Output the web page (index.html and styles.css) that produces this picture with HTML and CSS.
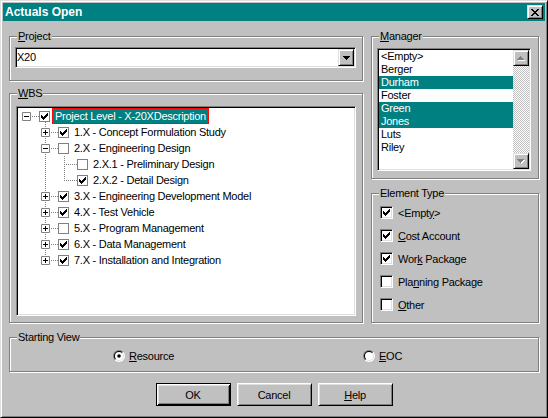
FILE: index.html
```html
<!DOCTYPE html>
<html>
<head>
<meta charset="utf-8">
<title>Actuals Open</title>
<link rel="stylesheet" href="styles.css">
</head>
<body>
<div class="window">
  <div class="titlebar">
    <span class="title">Actuals Open</span>
    <span class="close"><svg class="ico" width="8" height="7" viewBox="0 0 8 7"><path d="M0 0h2v1h-2zM6 0h2v1h-2zM1 1h2v1h-2zM5 1h2v1h-2zM2 2h4v1h-4zM3 3h2v1h-2zM2 4h4v1h-4zM1 5h2v1h-2zM5 5h2v1h-2zM0 6h2v1h-2zM6 6h2v1h-2z"/></svg></span>
  </div>
  <div class="client">
    <div class="top">
      <div class="leftcol">
        <div class="group project">
          <span class="legend"><u>P</u>roject</span>
          <div class="combo">
            <span class="combo-text">X20</span>
            <span class="dropbtn raised"><svg class="ico" width="7" height="4" viewBox="0 0 7 4"><path d="M0 0h7v1h-7zM1 1h5v1h-5zM2 2h3v1h-3zM3 3h1v1h-1z"/></svg></span>
          </div>
        </div>
        <div class="group wbs">
          <span class="legend"><u>W</u>BS</span>
          <div class="tree">
            <div class="row">
              <span class="col h"><svg class="exp" width="9" height="9" viewBox="0 0 9 9"><path d="M0.5 0.5h8v8h-8z" fill="#fff" stroke="#808080"/><path d="M2 4h5v1h-5z"/></svg></span>
              <span class="tcheck"><span class="tbox"><svg class="ico" width="7" height="7" viewBox="0 0 7 7"><path d="M6 0h1v1h-1zM5 1h2v1h-2zM0 2h1v1h-1zM4 2h3v1h-3zM0 3h2v1h-2zM3 3h3v1h-3zM0 4h5v1h-5zM1 5h3v1h-3zM2 6h1v1h-1z"/></svg></span></span>
              <span class="tlabel sel">Project Level - X-20XDescription</span>
            </div>
            <div class="row">
              <span class="col"></span>
              <span class="col v first h"><svg class="exp" width="9" height="9" viewBox="0 0 9 9"><path d="M0.5 0.5h8v8h-8z" fill="#fff" stroke="#808080"/><path d="M2 4h5v1h-5zM4 2h1v5h-1z"/></svg></span>
              <span class="tcheck"><span class="tbox"><svg class="ico" width="7" height="7" viewBox="0 0 7 7"><path d="M6 0h1v1h-1zM5 1h2v1h-2zM0 2h1v1h-1zM4 2h3v1h-3zM0 3h2v1h-2zM3 3h3v1h-3zM0 4h5v1h-5zM1 5h3v1h-3zM2 6h1v1h-1z"/></svg></span></span>
              <span class="tlabel">1.X - Concept Formulation Study</span>
            </div>
            <div class="row">
              <span class="col"></span>
              <span class="col v h"><svg class="exp" width="9" height="9" viewBox="0 0 9 9"><path d="M0.5 0.5h8v8h-8z" fill="#fff" stroke="#808080"/><path d="M2 4h5v1h-5z"/></svg></span>
              <span class="tcheck"><span class="tbox"></span></span>
              <span class="tlabel">2.X - Engineering Design</span>
            </div>
            <div class="row">
              <span class="col"></span>
              <span class="col v"></span>
              <span class="col v h"></span>
              <span class="tcheck"><span class="tbox"></span></span>
              <span class="tlabel">2.X.1 - Preliminary Design</span>
            </div>
            <div class="row">
              <span class="col"></span>
              <span class="col v"></span>
              <span class="col v last h"></span>
              <span class="tcheck"><span class="tbox"><svg class="ico" width="7" height="7" viewBox="0 0 7 7"><path d="M6 0h1v1h-1zM5 1h2v1h-2zM0 2h1v1h-1zM4 2h3v1h-3zM0 3h2v1h-2zM3 3h3v1h-3zM0 4h5v1h-5zM1 5h3v1h-3zM2 6h1v1h-1z"/></svg></span></span>
              <span class="tlabel">2.X.2 - Detail Design</span>
            </div>
            <div class="row">
              <span class="col"></span>
              <span class="col v h"><svg class="exp" width="9" height="9" viewBox="0 0 9 9"><path d="M0.5 0.5h8v8h-8z" fill="#fff" stroke="#808080"/><path d="M2 4h5v1h-5zM4 2h1v5h-1z"/></svg></span>
              <span class="tcheck"><span class="tbox"><svg class="ico" width="7" height="7" viewBox="0 0 7 7"><path d="M6 0h1v1h-1zM5 1h2v1h-2zM0 2h1v1h-1zM4 2h3v1h-3zM0 3h2v1h-2zM3 3h3v1h-3zM0 4h5v1h-5zM1 5h3v1h-3zM2 6h1v1h-1z"/></svg></span></span>
              <span class="tlabel">3.X - Engineering Development Model</span>
            </div>
            <div class="row">
              <span class="col"></span>
              <span class="col v h"><svg class="exp" width="9" height="9" viewBox="0 0 9 9"><path d="M0.5 0.5h8v8h-8z" fill="#fff" stroke="#808080"/><path d="M2 4h5v1h-5zM4 2h1v5h-1z"/></svg></span>
              <span class="tcheck"><span class="tbox"><svg class="ico" width="7" height="7" viewBox="0 0 7 7"><path d="M6 0h1v1h-1zM5 1h2v1h-2zM0 2h1v1h-1zM4 2h3v1h-3zM0 3h2v1h-2zM3 3h3v1h-3zM0 4h5v1h-5zM1 5h3v1h-3zM2 6h1v1h-1z"/></svg></span></span>
              <span class="tlabel">4.X - Test Vehicle</span>
            </div>
            <div class="row">
              <span class="col"></span>
              <span class="col v h"><svg class="exp" width="9" height="9" viewBox="0 0 9 9"><path d="M0.5 0.5h8v8h-8z" fill="#fff" stroke="#808080"/><path d="M2 4h5v1h-5zM4 2h1v5h-1z"/></svg></span>
              <span class="tcheck"><span class="tbox"></span></span>
              <span class="tlabel">5.X - Program Management</span>
            </div>
            <div class="row">
              <span class="col"></span>
              <span class="col v h"><svg class="exp" width="9" height="9" viewBox="0 0 9 9"><path d="M0.5 0.5h8v8h-8z" fill="#fff" stroke="#808080"/><path d="M2 4h5v1h-5zM4 2h1v5h-1z"/></svg></span>
              <span class="tcheck"><span class="tbox"><svg class="ico" width="7" height="7" viewBox="0 0 7 7"><path d="M6 0h1v1h-1zM5 1h2v1h-2zM0 2h1v1h-1zM4 2h3v1h-3zM0 3h2v1h-2zM3 3h3v1h-3zM0 4h5v1h-5zM1 5h3v1h-3zM2 6h1v1h-1z"/></svg></span></span>
              <span class="tlabel">6.X - Data Management</span>
            </div>
            <div class="row">
              <span class="col"></span>
              <span class="col v last h"><svg class="exp" width="9" height="9" viewBox="0 0 9 9"><path d="M0.5 0.5h8v8h-8z" fill="#fff" stroke="#808080"/><path d="M2 4h5v1h-5zM4 2h1v5h-1z"/></svg></span>
              <span class="tcheck"><span class="tbox"><svg class="ico" width="7" height="7" viewBox="0 0 7 7"><path d="M6 0h1v1h-1zM5 1h2v1h-2zM0 2h1v1h-1zM4 2h3v1h-3zM0 3h2v1h-2zM3 3h3v1h-3zM0 4h5v1h-5zM1 5h3v1h-3zM2 6h1v1h-1z"/></svg></span></span>
              <span class="tlabel">7.X - Installation and Integration</span>
            </div>
          </div>
        </div>
      </div>
      <div class="rightcol">
        <div class="group manager">
          <span class="legend"><u>M</u>anager</span>
          <div class="listbox">
            <ul class="list">
              <li>&lt;Empty&gt;</li>
              <li>Berger</li>
              <li class="sel">Durham</li>
              <li>Foster</li>
              <li class="sel">Green</li>
              <li class="sel">Jones</li>
              <li>Luts</li>
              <li>Riley</li>
            </ul>
            <div class="vscroll">
              <span class="sbtn raised"><svg class="ico" width="8" height="5" viewBox="0 0 8 5"><path fill="#fff" d="M4 1h1v1h-1zM3 2h3v1h-3zM2 3h5v1h-5zM1 4h7v1h-7z"/><path fill="#808080" d="M3 0h1v1h-1zM2 1h3v1h-3zM1 2h5v1h-5zM0 3h7v1h-7z"/></svg></span>
              <span class="track"></span>
              <span class="sbtn raised"><svg class="ico" width="8" height="5" viewBox="0 0 8 5"><path fill="#fff" d="M1 1h7v1h-7zM2 2h5v1h-5zM3 3h3v1h-3zM4 4h1v1h-1z"/><path fill="#808080" d="M0 0h7v1h-7zM1 1h5v1h-5zM2 2h3v1h-3zM3 3h1v1h-1z"/></svg></span>
            </div>
          </div>
        </div>
        <div class="group etype">
          <span class="legend">Element Type</span>
          <div class="crow"><span class="cbox"><svg class="ico" width="7" height="7" viewBox="0 0 7 7"><path d="M6 0h1v1h-1zM5 1h2v1h-2zM0 2h1v1h-1zM4 2h3v1h-3zM0 3h2v1h-2zM3 3h3v1h-3zM0 4h5v1h-5zM1 5h3v1h-3zM2 6h1v1h-1z"/></svg></span><span>&lt;Empt<u>y</u>&gt;</span></div>
          <div class="crow"><span class="cbox"><svg class="ico" width="7" height="7" viewBox="0 0 7 7"><path d="M6 0h1v1h-1zM5 1h2v1h-2zM0 2h1v1h-1zM4 2h3v1h-3zM0 3h2v1h-2zM3 3h3v1h-3zM0 4h5v1h-5zM1 5h3v1h-3zM2 6h1v1h-1z"/></svg></span><span><u>C</u>ost Account</span></div>
          <div class="crow"><span class="cbox"><svg class="ico" width="7" height="7" viewBox="0 0 7 7"><path d="M6 0h1v1h-1zM5 1h2v1h-2zM0 2h1v1h-1zM4 2h3v1h-3zM0 3h2v1h-2zM3 3h3v1h-3zM0 4h5v1h-5zM1 5h3v1h-3zM2 6h1v1h-1z"/></svg></span><span>Wor<u>k</u> Package</span></div>
          <div class="crow"><span class="cbox"></span><span>Pla<u>n</u>ning Package</span></div>
          <div class="crow"><span class="cbox"></span><span><u>O</u>ther</span></div>
        </div>
      </div>
    </div>
    <div class="group sview">
      <span class="legend">Starting View</span>
      <div class="radios">
        <div class="radio">
          <svg class="ico" width="12" height="12" viewBox="0 0 12 12">
            <defs>
              <linearGradient id="rout" x1="0" y1="0" x2="1" y2="1"><stop offset="0.5" stop-color="#808080"/><stop offset="0.5" stop-color="#fff"/></linearGradient>
              <linearGradient id="rin" x1="0" y1="0" x2="1" y2="1"><stop offset="0.5" stop-color="#000"/><stop offset="0.5" stop-color="#dfdfdf"/></linearGradient>
            </defs>
            <circle cx="6" cy="6" r="6" fill="url(#rout)"/>
            <circle cx="6" cy="6" r="5" fill="url(#rin)"/>
            <circle cx="6" cy="6" r="4" fill="#fff"/>
            <circle cx="6" cy="6" r="1.8" fill="#000"/>
          </svg>
          <span><u>R</u>esource</span>
        </div>
        <div class="radio">
          <svg class="ico" width="12" height="12" viewBox="0 0 12 12">
            <circle cx="6" cy="6" r="6" fill="url(#rout)"/>
            <circle cx="6" cy="6" r="5" fill="url(#rin)"/>
            <circle cx="6" cy="6" r="4" fill="#fff"/>
          </svg>
          <span><u>E</u>OC</span>
        </div>
      </div>
    </div>
    <div class="buttons">
      <button class="btn default">OK</button>
      <button class="btn">Cancel</button>
      <button class="btn"><u>H</u>elp</button>
    </div>
  </div>
</div>
</body>
</html>
```
FILE: styles.css
```css
html, body {
  margin: 0;
  padding: 0;
  background: #c0c0c0;
}
body {
  font-family: "Liberation Sans", Arial, sans-serif;
  font-size: 11px;
  letter-spacing: -0.25px;
  color: #000;
}
.ico { display: block; }

.raised {
  box-sizing: border-box;
  border: 1px solid;
  border-color: #dfdfdf #000 #000 #dfdfdf;
  box-shadow: inset 1px 1px #fff, inset -1px -1px #808080;
  background: #c0c0c0;
}

.window {
  width: 548px;
  height: 418px;
  box-sizing: border-box;
  border: 1px solid;
  border-color: #dfdfdf #000 #000 #dfdfdf;
  box-shadow: inset 1px 1px #fff, inset -1px -1px #808080;
  padding: 2px;
  background: #c0c0c0;
}

.titlebar {
  height: 18px;
  background: #008080;
  display: flex;
  align-items: center;
  justify-content: space-between;
  padding: 0 2px;
}
.title {
  color: #fff;
  font-weight: bold;
  font-size: 12px;
  letter-spacing: 0;
  line-height: 18px;
}
.close {
  width: 16px;
  height: 14px;
  box-sizing: border-box;
  border: 1px solid;
  border-color: #dfdfdf #000 #000 #dfdfdf;
  box-shadow: inset 1px 1px #fff, inset -1px -1px #808080;
  background: #c0c0c0;
  display: flex;
  align-items: center;
  justify-content: center;
}

.client {
  padding: 15px 6px 0;
}
.top {
  display: grid;
  grid-template-columns: 354px 168px;
  column-gap: 8px;
}
.leftcol, .rightcol {
  display: flex;
  flex-direction: column;
}

.group {
  position: relative;
  box-sizing: border-box;
  border: 1px solid #808080;
  box-shadow: inset 1px 1px #fff, 1px 1px #fff;
}
.legend {
  position: absolute;
  top: -7px;
  left: 7px;
  padding: 0 1px;
  line-height: 13px;
  background: #c0c0c0;
  white-space: nowrap;
}

/* Project */
.project {
  height: 45px;
  padding: 10px 6px 0 5px;
}
.combo {
  display: flex;
  height: 21px;
  box-sizing: border-box;
  border: 1px solid;
  border-color: #808080 #fff #fff #808080;
  box-shadow: inset 1px 1px #000, inset -1px -1px #dfdfdf;
  background: #fff;
  padding: 1px;
}
.combo-text {
  flex: 1;
  line-height: 17px;
}
.dropbtn {
  width: 16px;
  height: 17px;
  display: flex;
  align-items: center;
  justify-content: center;
}

/* WBS tree */
.wbs {
  height: 230px;
  margin-top: 12px;
  padding: 12px 6px 0 6px;
}
.tree {
  height: 210px;
  box-sizing: border-box;
  background: #fff;
  border: 1px solid;
  border-color: #808080 #fff #fff #808080;
  box-shadow: inset 1px 1px #000, inset -1px -1px #dfdfdf;
  padding: 1px;
}
.row {
  display: flex;
  align-items: flex-start;
  height: 16px;
}
.col {
  position: relative;
  flex: none;
  width: 19px;
  height: 16px;
}
.col.v::before {
  content: "";
  position: absolute;
  left: 8px;
  top: 0;
  width: 1px;
  height: 16px;
  background: repeating-linear-gradient(to bottom, #808080 0 1px, transparent 1px 2px);
}
.col.v.first::before {
  top: -2px;
  height: 18px;
}
.col.v.last::before {
  height: 9px;
}
.col.h::after {
  content: "";
  position: absolute;
  left: 9px;
  top: 8px;
  width: 12px;
  height: 1px;
  background: repeating-linear-gradient(to right, transparent 0 1px, #808080 1px 2px);
}
.exp {
  position: absolute;
  left: 4px;
  top: 4px;
  z-index: 1;
  display: block;
}
.tcheck {
  flex: none;
  width: 15px;
  height: 16px;
}
.tbox {
  display: block;
  box-sizing: border-box;
  width: 11px;
  height: 11px;
  margin: 3px 0 0 2px;
  border: 1px solid #808080;
  background: #fff;
  padding: 1px;
}
.tlabel {
  line-height: 14px;
  padding: 1px 3px;
  white-space: nowrap;
}
.tlabel.sel {
  color: #fff;
  background:
    repeating-linear-gradient(to right, #ff0000 0 1px, transparent 1px 2px) left top / 100% 1px no-repeat,
    repeating-linear-gradient(to right, #ff0000 0 1px, transparent 1px 2px) left bottom / 100% 1px no-repeat,
    repeating-linear-gradient(to bottom, #ff0000 0 1px, transparent 1px 2px) left top / 1px 100% no-repeat,
    repeating-linear-gradient(to bottom, #ff0000 0 1px, transparent 1px 2px) right top / 1px 100% no-repeat,
    #008080;
}

/* Manager */
.manager {
  height: 143px;
  padding: 11px 0 0 5px;
}
.listbox {
  display: flex;
  width: 154px;
  height: 123px;
  box-sizing: border-box;
  background: #fff;
  border: 1px solid;
  border-color: #808080 #fff #fff #808080;
  box-shadow: inset 1px 1px #000, inset -1px -1px #dfdfdf;
  padding: 1px;
}
.list {
  list-style: none;
  margin: 0;
  padding: 0;
  flex: 1;
}
.list li {
  height: 13px;
  line-height: 13px;
  padding-left: 2px;
  white-space: nowrap;
}
.list li.sel {
  background: #008080;
  color: #fff;
}
.vscroll {
  width: 16px;
  display: flex;
  flex-direction: column;
  background: repeating-conic-gradient(#c0c0c0 0 25%, #fff 0 50%) 0 0 / 2px 2px;
}
.sbtn {
  width: 16px;
  height: 16px;
  display: flex;
  align-items: center;
  justify-content: center;
  flex: none;
}
.track { flex: 1; }

/* Element type */
.etype {
  height: 130px;
  margin-top: 14px;
  padding: 7px 0 0 8px;
}
.crow {
  display: flex;
  align-items: center;
  gap: 5px;
  height: 23px;
}
.cbox {
  flex: none;
  width: 13px;
  height: 13px;
  box-sizing: border-box;
  border: 1px solid;
  border-color: #808080 #fff #fff #808080;
  box-shadow: inset 1px 1px #000, inset -1px -1px #dfdfdf;
  background: #fff;
  padding: 2px;
}

/* Starting view */
.sview {
  height: 35px;
  margin-top: 14px;
  padding: 11px 0 0 103px;
}
.radios {
  display: grid;
  grid-template-columns: 250px auto;
}
.radio {
  display: flex;
  align-items: center;
  gap: 4px;
  height: 13px;
}

/* Buttons */
.buttons {
  display: flex;
  justify-content: center;
  gap: 6px;
  margin-top: 11px;
}
.btn {
  width: 75px;
  height: 23px;
  box-sizing: border-box;
  margin: 0;
  padding: 0;
  font: inherit;
  letter-spacing: inherit;
  color: #000;
  background: #c0c0c0;
  border: 1px solid;
  border-color: #fff #000 #000 #fff;
  box-shadow: inset 1px 1px #dfdfdf, inset -1px -1px #808080;
}
.btn.default {
  border-color: #000;
  box-shadow: inset 1px 1px #fff, inset -1px -1px #000, inset 2px 2px #dfdfdf, inset -2px -2px #808080;
}
```
